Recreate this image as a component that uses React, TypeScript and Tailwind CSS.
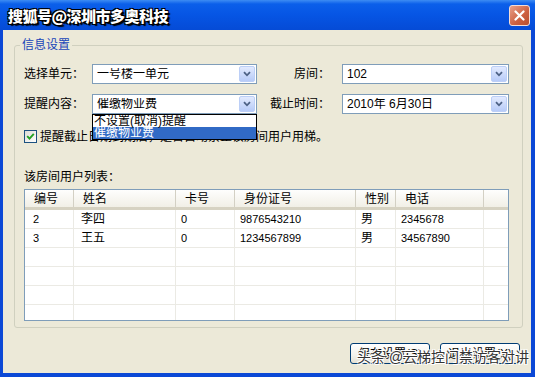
import React from "react";

const COLS = ["编号", "姓名", "卡号", "身份证号", "性别", "电话", ""];

const ROWS = [
  ["2", "李四", "0", "9876543210", "男", "2345678", ""],
  ["3", "王五", "0", "1234567899", "男", "34567890", ""],
  ["", "", "", "", "", "", ""],
  ["", "", "", "", "", "", ""],
  ["", "", "", "", "", "", ""],
  ["", "", "", "", "", "", ""],
];

const GRID = "grid grid-cols-[49px_102px_59px_121px_40px_88px_1fr]";

function Combo({ value, className = "" }: { value: string; className?: string }) {
  return (
    <div
      className={`flex h-[20px] items-center border border-[#7f9db9] bg-white pl-[4px] pr-[1px] ${className}`}
    >
      <span className="flex-1 truncate text-[12px] leading-none text-black">{value}</span>
      <span className="flex h-[16px] w-[16px] items-center justify-center rounded-[2px] border border-[#bccff7] bg-[linear-gradient(#e2eafe,#b7cbf8)]">
        <svg width="8" height="6" viewBox="0 0 8 6">
          <path d="M1 1.2 L4 4.3 L7 1.2" stroke="#4d6185" strokeWidth="1.8" fill="none" />
        </svg>
      </span>
    </div>
  );
}

function XpButton({ label }: { label: string }) {
  return (
    <button className="h-[21px] w-[80px] rounded-[3px] border border-[#003c74] bg-[linear-gradient(#ffffff,#f3f2ec_60%,#e3e0d2)] text-[12px] leading-none text-black">
      {label}
    </button>
  );
}

export default function App() {
  return (
    <div className="relative flex h-[377px] w-[535px] flex-col overflow-hidden bg-[#0b48d6] font-['Liberation_Sans','Noto_Sans_CJK_SC',sans-serif] text-black">
      {/* title bar */}
      <div className="flex h-[30px] shrink-0 items-center justify-between bg-[linear-gradient(#3d8cf3,#0b5fea_4px,#0655e4_50%,#054bd6)] pl-[8px] pr-[5px]">
        <span className="font-['Noto_Sans_CJK_SC',sans-serif] text-[15px] font-black leading-none tracking-[-0.5px] text-white [text-shadow:1px_1px_0_#000,-1px_-1px_0_#000,1px_-1px_0_#000,-1px_1px_0_#000,2px_2px_1px_#000]">
          搜狐号@深圳市多奥科技
        </span>
        <div className="flex h-[21px] w-[21px] items-center justify-center rounded-[3px] border border-[#f4ddd6] bg-[linear-gradient(135deg,#e8a08a,#cc5f3f_60%,#b8502f)]">
          <svg width="11" height="11" viewBox="0 0 11 11">
            <path d="M1.5 1.5 L9.5 9.5 M9.5 1.5 L1.5 9.5" stroke="#fff" strokeWidth="2.2" strokeLinecap="round" />
          </svg>
        </div>
      </div>

      {/* client area */}
      <div className="mb-[4px] ml-[3px] mr-[4px] flex flex-1 flex-col bg-[#ece9d8] pl-[11px] pr-[8px] pt-[8px]">
        <fieldset className="m-0 rounded-[3px] border border-[#d0d0bf] p-0">
          <legend className="ml-[5px] px-[2px] text-[12px] leading-[14px] text-[#1846b8]">信息设置</legend>
          <div className="pb-[6px] pl-[9px] pr-[13px] pt-[12px]">
            {/* row 1 */}
            <div className="flex h-[20px] items-center text-[12px]">
              <span className="w-[68px]">选择单元：</span>
              <Combo value="一号楼一单元" className="w-[165px]" />
              <span className="w-[85px] pr-[12px] text-right">房间：</span>
              <Combo value="102" className="flex-1" />
            </div>

            {/* row 2 */}
            <div className="relative mt-[10px] flex h-[20px] items-center text-[12px]">
              <span className="w-[68px]">提醒内容：</span>
              <Combo value="催缴物业费" className="w-[165px]" />
              <span className="w-[85px] pr-[12px] text-right">截止时间：</span>
              <Combo value="2010年 6月30日" className="flex-1" />

              <div className="absolute left-[68px] top-[20px] z-10 w-[165px] border border-black bg-white text-[12px]">
                <div className="h-[12px] pl-[1px] leading-[12px]">不设置(取消)提醒</div>
                <div className="h-[12px] bg-[#316ac5] pl-[1px] leading-[12px] text-white">催缴物业费</div>
              </div>
            </div>

            {/* checkbox */}
            <div className="mt-[16px] flex h-[13px] items-center gap-[3px] text-[12px]">
              <span className="flex h-[13px] w-[13px] items-center justify-center border border-[#1c5180] bg-[linear-gradient(135deg,#dcdbd5,#ffffff)]">
                <svg width="9" height="9" viewBox="0 0 9 9">
                  <path d="M1.2 4.2 L3.5 6.6 L7.8 1.8" stroke="#21a121" strokeWidth="1.9" fill="none" />
                </svg>
              </span>
              <span className="leading-none">提醒截止日期到期后，是否自动禁止该房间用户用梯。</span>
            </div>

            <div className="mt-[27px] text-[12px] leading-[14px]">该房间用户列表：</div>

            {/* list view */}
            <div className="mt-[5px] h-[132px] overflow-hidden border border-[#7f9db9] bg-white">
              <div className={`${GRID} h-[20px] border-b-[3px] border-[#d6d2c2] bg-[linear-gradient(#fefefd,#f1efe6)] text-[12px]`}>
                {COLS.map((c, i) => (
                  <div
                    key={i}
                    className={`flex items-center pl-[9px] leading-none ${
                      i < COLS.length - 1 ? "border-r border-[#d3d0c4]" : ""
                    }`}
                  >
                    {c}
                  </div>
                ))}
              </div>
              {ROWS.map((r, ri) => (
                <div key={ri} className={`${GRID} h-[19px] border-b border-[#ebeae4] text-[11px]`}>
                  {r.map((v, ci) => (
                    <div
                      key={ci}
                      className={`flex items-center leading-none ${ci === 0 ? "pl-[8px]" : ci === 1 ? "pl-[7px]" : "pl-[5px]"} ${
                        ci === 1 || ci === 4 ? "text-[12px]" : ""
                      } ${ci < r.length - 1 ? "border-r border-[#ebeae4]" : ""}`}
                    >
                      {v}
                    </div>
                  ))}
                </div>
              ))}
            </div>
          </div>
        </fieldset>

        <div className="mt-[15px] flex justify-end gap-[10px] pr-[3px]">
          <XpButton label="保存设置(S)" />
          <XpButton label="退出设置(X)" />
        </div>
      </div>

      {/* watermark */}
      <div className="absolute left-[357px] top-[350px] whitespace-nowrap text-[14px] leading-none text-[#333] [text-shadow:1px_1px_0_#fff,-1px_-1px_0_#fff,1px_-1px_0_#fff,-1px_1px_0_#fff]">
        头条 @云梯控门禁访客对讲
      </div>
    </div>
  );
}
